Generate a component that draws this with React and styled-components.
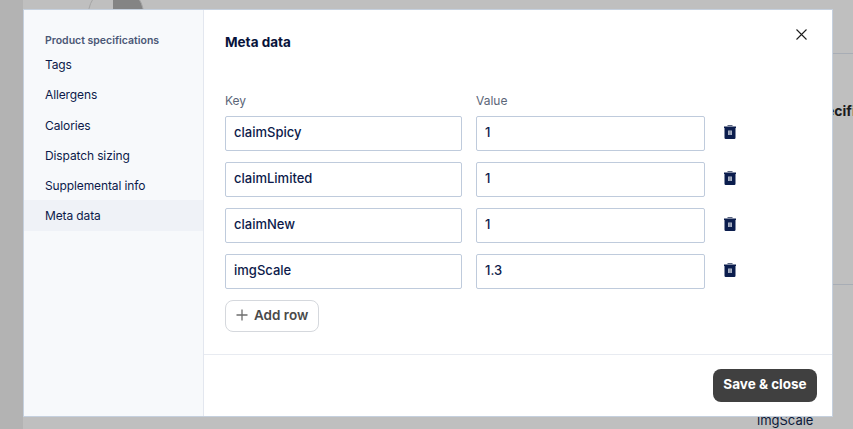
import styled, { createGlobalStyle } from "styled-components";

const Global = createGlobalStyle`
  html, body {
    margin: 0;
    height: 100%;
    overflow: hidden;
    background: #bfbfbf;
    font-family: "Inter", "Liberation Sans", sans-serif;
  }
`;

const Page = styled.div`
  position: relative;
  width: 853px;
  height: 429px;
  overflow: hidden;
  background: #bfbfbf;
`;

const SideStrip = styled.div`
  position: absolute;
  left: 0;
  top: 0;
  bottom: 0;
  width: 23px;
  background: #b3b3b3;
`;

const Avatar = styled.div`
  position: absolute;
  left: 88px;
  top: -14px;
  width: 56px;
  height: 56px;
  box-sizing: border-box;
  border-radius: 50%;
  border: 1px solid #a5a5a5;
  background: linear-gradient(90deg, transparent 24px, #848484 24px);
`;

const BackLine = styled.div`
  position: absolute;
  left: 832px;
  right: 0;
  top: ${({ $top }) => $top}px;
  height: 1px;
  background: #a8adb5;
`;

const BackHeading = styled.div`
  position: absolute;
  left: 832px;
  top: 102px;
  width: 21px;
  overflow: hidden;
  white-space: nowrap;
  font-size: 14px;
  font-weight: 700;
  color: #1b1b1b;
  span {
    margin-left: -6px;
  }
`;

const BackText = styled.div`
  position: absolute;
  left: 757px;
  top: 412px;
  font-size: 13px;
  color: #0c1a3a;
`;

const Dialog = styled.div`
  position: absolute;
  left: 24px;
  top: 10px;
  width: 808px;
  height: 406px;
  display: flex;
  background: #fff;
  box-shadow: 0 0 0 1px #c5d0de;
`;

const Sidebar = styled.nav`
  width: 180px;
  flex-shrink: 0;
  box-sizing: border-box;
  padding-top: 24px;
  background: #f7f9fb;
  border-right: 1px solid #e3e7ef;
`;

const SideHeading = styled.div`
  height: 13px;
  line-height: 13px;
  margin: 0 0 2px 21px;
  font-size: 10.5px;
  font-weight: 600;
  color: #4a5775;
`;

const NavItem = styled.div`
  height: 30.3px;
  line-height: 32px;
  padding-left: 21px;
  font-size: 12px;
  letter-spacing: -0.12px;
  color: #0c1a4a;
  background: ${({ $active }) => ($active ? "#eff2f7" : "transparent")};
`;

const Main = styled.div`
  flex: 1;
  display: flex;
  flex-direction: column;
  position: relative;
`;

const Content = styled.div`
  flex: 1;
  padding: 24px 0 0 21px;
`;

const Title = styled.h2`
  margin: 0 0 44px;
  height: 16px;
  line-height: 16px;
  font-size: 13.5px;
  font-weight: 700;
  color: #07123a;
`;

const CloseButton = styled.button`
  position: absolute;
  top: 17px;
  right: 24px;
  width: 13px;
  height: 13px;
  padding: 0;
  border: 0;
  background: none;
  display: flex;
`;

const Labels = styled.div`
  display: flex;
  gap: 14px;
  margin-bottom: 8px;
`;

const Label = styled.div`
  width: ${({ $w }) => $w}px;
  height: 14px;
  line-height: 14px;
  font-size: 12px;
  color: #5c6678;
`;

const Row = styled.div`
  display: flex;
  align-items: center;
  gap: 14px;
  margin-bottom: 11px;
`;

const Input = styled.input`
  width: ${({ $w }) => $w}px;
  height: 35px;
  box-sizing: border-box;
  padding: 0 8px 3px;
  border: 1px solid #bfcbdc;
  border-radius: 2px;
  outline: none;
  font-family: inherit;
  font-size: 13px;
  font-weight: 500;
  color: #0c1a4a;
  background: #fff;
`;

const TrashButton = styled.button`
  width: 12px;
  height: 14px;
  margin: -3px 0 0 5px;
  padding: 0;
  border: 0;
  background: none;
  display: flex;
`;

const AddRow = styled.button`
  width: 94px;
  height: 32px;
  display: flex;
  align-items: center;
  gap: 5px;
  padding: 0 0 2px 9px;
  box-sizing: border-box;
  border: 1px solid #d5d8dd;
  border-radius: 8px;
  background: #fff;
  font-family: inherit;
  font-size: 13.5px;
  font-weight: 600;
  color: #4a4a4a;
`;

const Footer = styled.div`
  height: 62px;
  box-sizing: border-box;
  display: flex;
  justify-content: flex-end;
  align-items: flex-start;
  padding: 14px 15px 0 0;
  border-top: 1px solid #e8ebf1;
`;

const SaveButton = styled.button`
  width: 104px;
  height: 33px;
  padding: 0 0 3px;
  border: 0;
  border-radius: 8px;
  background: #404040;
  font-family: inherit;
  font-size: 13.5px;
  font-weight: 700;
  color: #fff;
`;

const TrashIcon = () => (
  <svg width="12" height="14" viewBox="0 0 12 14">
    <rect x="3.5" y="0" width="5" height="1" fill="#5a6580" />
    <rect x="0" y="1.5" width="12" height="1.5" fill="#0b1d4d" />
    <path d="M0.5 3h11v9.8a1.2 1.2 0 0 1-1.2 1.2H1.7a1.2 1.2 0 0 1-1.2-1.2z" fill="#0b1d4d" />
    <rect x="4" y="5.5" width="4" height="4.5" fill="#a9b1c3" />
    <rect x="5.6" y="5.5" width="0.8" height="4.5" fill="#6f7a96" />
  </svg>
);

const navItems = ["Tags", "Allergens", "Calories", "Dispatch sizing", "Supplemental info", "Meta data"];

const rows = [
  ["claimSpicy", "1"],
  ["claimLimited", "1"],
  ["claimNew", "1"],
  ["imgScale", "1.3"],
];

export default function App() {
  return (
    <Page>
      <Global />
      <SideStrip />
      <Avatar />
      <BackLine $top={53} />
      <BackLine $top={284} />
      <BackHeading>
        <span>ecifi</span>
      </BackHeading>
      <BackText>imgScale</BackText>
      <Dialog>
        <Sidebar>
          <SideHeading>Product specifications</SideHeading>
          {navItems.map((item) => (
            <NavItem key={item} $active={item === "Meta data"}>
              {item}
            </NavItem>
          ))}
        </Sidebar>
        <Main>
          <CloseButton aria-label="Close">
            <svg width="13" height="13" viewBox="0 0 13 13">
              <path d="M1.5 2.5l10 10M11.5 2.5l-10 10" stroke="#1d1d1d" strokeWidth="1.1" fill="none" />
            </svg>
          </CloseButton>
          <Content>
            <Title>Meta data</Title>
            <Labels>
              <Label $w={237}>Key</Label>
              <Label $w={229}>Value</Label>
            </Labels>
            {rows.map(([key, value]) => (
              <Row key={key}>
                <Input $w={237} defaultValue={key} />
                <Input $w={229} defaultValue={value} />
                <TrashButton aria-label="Delete">
                  <TrashIcon />
                </TrashButton>
              </Row>
            ))}
            <AddRow>
              <svg width="14" height="14" viewBox="0 0 14 14">
                <path d="M7 1.5v11M1.5 7h11" stroke="#6e6e6e" strokeWidth="1.3" fill="none" />
              </svg>
              Add row
            </AddRow>
          </Content>
          <Footer>
            <SaveButton>Save &amp; close</SaveButton>
          </Footer>
        </Main>
      </Dialog>
    </Page>
  );
}
